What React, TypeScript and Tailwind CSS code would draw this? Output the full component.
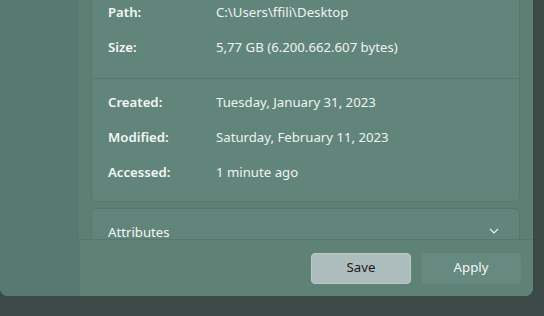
import React from 'react'

const rowsTop = [
  { label: 'Path:', value: 'C:\\Users\\ffili\\Desktop' },
  { label: 'Size:', value: '5,77 GB (6.200.662.607 bytes)' },
]

const rowsDates = [
  { label: 'Created:', value: 'Tuesday, January 31, 2023' },
  { label: 'Modified:', value: 'Saturday, February 11, 2023' },
  { label: 'Accessed:', value: '1 minute ago' },
]

function InfoRow({ label, value }: { label: string; value: string }) {
  return (
    <div className="flex h-[35px] items-center px-[16px]">
      <span className="w-[108px] font-semibold text-[#f3f6f5]">{label}</span>
      <span className="text-[#eef3f1]">{value}</span>
    </div>
  )
}

export default function App() {
  return (
    <div
      className="h-[316px] w-[544px] overflow-hidden bg-[#3b4a46] text-[13.2px]"
      style={{ fontFamily: '"Noto Sans", "Open Sans", sans-serif' }}
    >
      <div className="flex h-[296px] w-[533px] overflow-hidden rounded-b-[8px] bg-[#5d8075]">
        <div className="w-[79px] shrink-0 bg-[#567a70]" />

        <div className="flex min-w-0 flex-1 flex-col">
          <div className="flex-1 overflow-hidden pl-[12px] pr-[13px]">
            <div className="mt-[-12px] rounded-[5px] border border-[#56786e] bg-[#62857b]">
              <div className="pt-[6px] pb-[13px]">
                {rowsTop.map(r => (
                  <InfoRow key={r.label} {...r} />
                ))}
              </div>
              <div className="border-t border-[#56786e] pt-[6px] pb-[11px]">
                {rowsDates.map(r => (
                  <InfoRow key={r.label} {...r} />
                ))}
              </div>
            </div>

            <div className="mt-[6px] rounded-[5px] border border-[#56786e] bg-[#62857b]">
              <div className="flex h-[45px] items-center justify-between px-[16px]">
                <span className="leading-[16px] text-[#f3f6f5]">Attributes</span>
                <svg width="10" height="6" viewBox="0 0 10 6" className="mr-[4px] mb-[2px]">
                  <path d="M1 1 L5 5 L9 1" fill="none" stroke="#eef3f1" strokeWidth="1.1" />
                </svg>
              </div>
            </div>
          </div>

          <div className="flex h-[57px] shrink-0 items-center justify-end gap-[10px] border-t border-l border-[#56786e] bg-[#5f8277] pr-[12px]">
            <button className="h-[31px] w-[100px] rounded-[4px] border border-[#bcc8c8] bg-[#adbcbc] text-[#1c1c1c]">
              Save
            </button>
            <button className="h-[31px] w-[100px] rounded-[4px] bg-[#668a80] text-[#f3f6f5]">
              Apply
            </button>
          </div>
        </div>
      </div>
    </div>
  )
}
